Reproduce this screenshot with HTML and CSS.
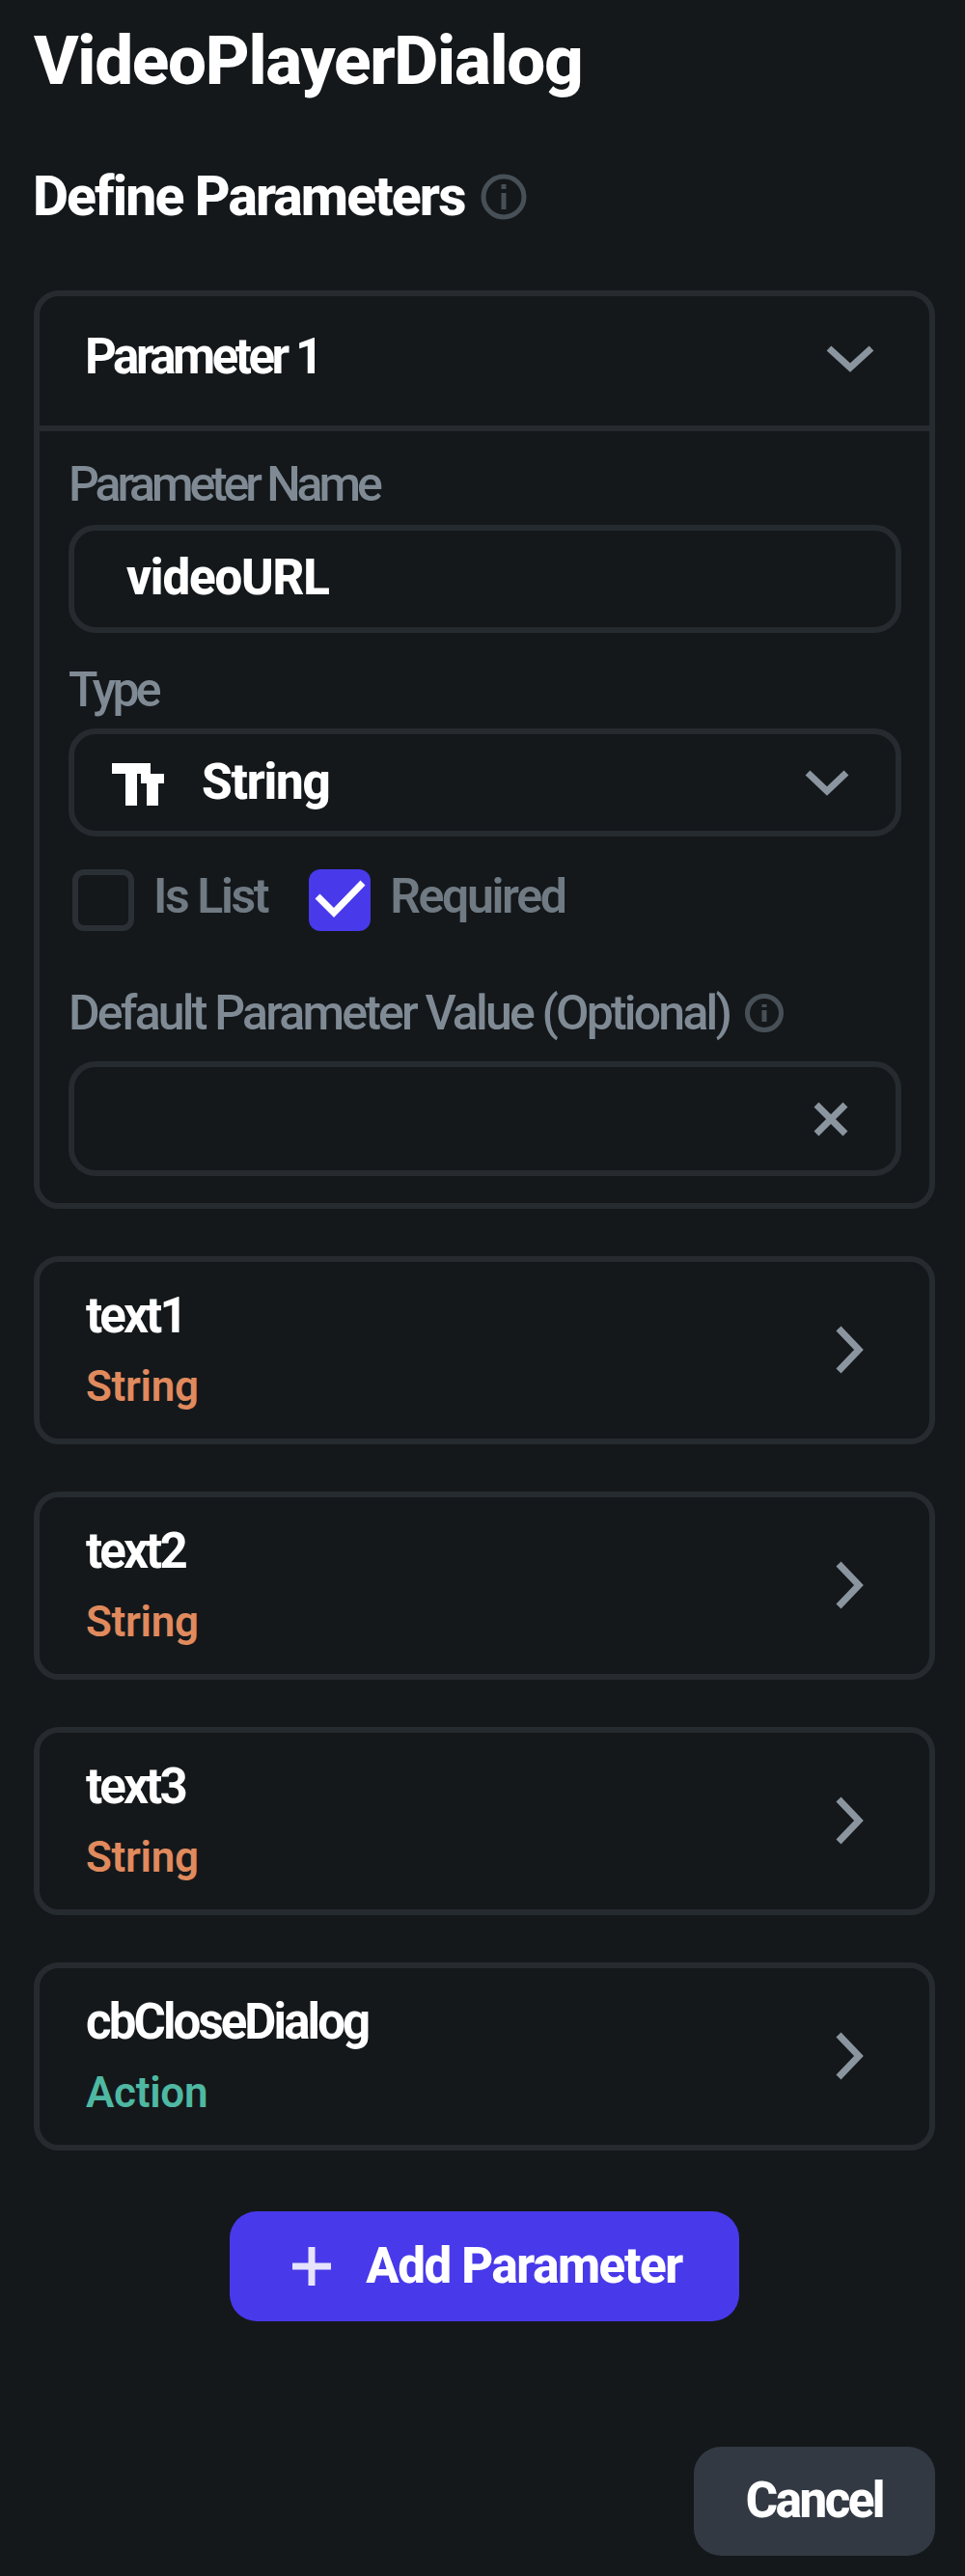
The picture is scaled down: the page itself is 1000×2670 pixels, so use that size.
FILE: index.html
```
<!DOCTYPE html>
<html lang="en">
<head>
    <meta charset="UTF-8">
    <title>VideoPlayerDialog</title>
    <link rel="stylesheet" href="styles.css">
</head>
<body>
    <div class="container">
        <h1>VideoPlayerDialog</h1>

        <div class="section-title">
            <h2>Define Parameters</h2>
            <svg class="info" width="50" height="50" viewBox="0 0 50 50">
                <circle cx="25" cy="25" r="21"/>
                <path d="M25 21v17M25 12v5"/>
            </svg>
        </div>

        <!-- Open parameter -->
        <div class="panel">
            <div class="panel-header">
                <span class="panel-name">Parameter 1</span>
                <svg class="icon" width="52" height="32" viewBox="0 0 52 32">
                    <path d="M4 5l22 20L48 5"/>
                </svg>
            </div>

            <div class="panel-body">
                <label class="label-name" for="name">Parameter Name</label>
                <input class="field" type="text" id="name" value="videoURL">

                <label class="label-type">Type</label>
                <div class="field select">
                    <svg class="type-icon" width="56" height="46" viewBox="0 0 56 46">
                        <path d="M1 1h40v11H27v33H15V12H1z"/>
                        <path d="M31 12h24v10h-6v23H37V22h-6z"/>
                    </svg>
                    <span class="select-value">String</span>
                    <svg class="icon" width="48" height="32" viewBox="0 0 48 32">
                        <path d="M4 6l20 19L44 6"/>
                    </svg>
                </div>

                <div class="checks">
                    <span class="checkbox"></span>
                    <span class="check-label">Is List</span>
                    <span class="checkbox checked">
                        <svg width="64" height="64" viewBox="0 0 64 64">
                            <path d="M9 28l17 17 30-31"/>
                        </svg>
                    </span>
                    <span class="check-label">Required</span>
                </div>

                <div class="label-row">
                    <label class="label-default">Default Parameter Value (Optional)</label>
                    <svg class="info" width="42" height="42" viewBox="0 0 42 42">
                        <circle cx="21" cy="21" r="17.5"/>
                        <path d="M21 18v12M21 12v3"/>
                    </svg>
                </div>
                <div class="field clearable">
                    <svg class="icon" width="38" height="36" viewBox="0 0 38 36">
                        <path d="M4 3l30 30M34 3L4 33"/>
                    </svg>
                </div>
            </div>
        </div>

        <!-- Collapsed parameters -->
        <div class="card">
            <div>
                <div class="card-name">text1</div>
                <div class="card-type string">String</div>
            </div>
            <svg class="icon" width="32" height="54" viewBox="0 0 32 54">
                <path d="M5 5l21 22L5 49"/>
            </svg>
        </div>

        <div class="card">
            <div>
                <div class="card-name">text2</div>
                <div class="card-type string">String</div>
            </div>
            <svg class="icon" width="32" height="54" viewBox="0 0 32 54">
                <path d="M5 5l21 22L5 49"/>
            </svg>
        </div>

        <div class="card">
            <div>
                <div class="card-name">text3</div>
                <div class="card-type string">String</div>
            </div>
            <svg class="icon" width="32" height="54" viewBox="0 0 32 54">
                <path d="M5 5l21 22L5 49"/>
            </svg>
        </div>

        <div class="card">
            <div>
                <div class="card-name long">cbCloseDialog</div>
                <div class="card-type action">Action</div>
            </div>
            <svg class="icon" width="32" height="54" viewBox="0 0 32 54">
                <path d="M5 5l21 22L5 49"/>
            </svg>
        </div>

        <button class="add" type="button">
            <svg width="44" height="44" viewBox="0 0 44 44">
                <path d="M22 2v40M2 22h40"/>
            </svg>
            <span>Add Parameter</span>
        </button>

        <button class="cancel" type="button">Cancel</button>
    </div>
</body>
</html>
```
FILE: styles.css
```
* {
    box-sizing: border-box;
}

body {
    margin: 0;
    background-color: #14181b;
    font-family: Roboto, "Liberation Sans", sans-serif;
    font-size: 51px;
    line-height: 60px;
    color: #fff;
}

.container {
    display: flex;
    flex-direction: column;
    padding: 23px 31px 20px 35px;
}

h1 {
    margin: 0;
    font-size: 71px;
    line-height: 80px;
    font-weight: 800;
    letter-spacing: -1.3px;
}

h2 {
    margin: 0;
    font-size: 57px;
    line-height: 60px;
    font-weight: 800;
    letter-spacing: -1.9px;
}

.section-title {
    display: flex;
    align-items: center;
    gap: 16px;
    margin-top: 71px;
    margin-left: -1px;
}

svg {
    display: block;
    fill: none;
}

.info {
    stroke: #475057;
    stroke-width: 5;
}

.icon {
    stroke: #8b959f;
    stroke-width: 7;
}

.panel {
    margin-top: 67px;
    border: 6px solid #262b30;
    border-radius: 26px;
}

.panel-header {
    display: flex;
    justify-content: space-between;
    align-items: center;
    height: 140px;
    padding: 0 56px 0 47px;
    border-bottom: 6px solid #262b30;
}

.panel-header .icon {
    margin-bottom: 4px;
}

.panel-name {
    padding-bottom: 8px;
    font-weight: bold;
    letter-spacing: -3.5px;
}

.panel-body {
    padding: 25px 29px 28px 30px;
}

label {
    display: block;
    font-size: 50px;
    font-weight: 500;
    color: #7f8a94;
}

.label-name {
    letter-spacing: -4.1px;
}

.label-type {
    margin-top: 29px;
    letter-spacing: -3.8px;
}

.label-default {
    letter-spacing: -2.8px;
}

.field {
    display: flex;
    align-items: center;
    width: 100%;
    height: 112px;
    border: 6px solid #262b30;
    border-radius: 28px;
    background: none;
    color: #fff;
    font-family: inherit;
    font-size: 51px;
    font-weight: 800;
    letter-spacing: -1.2px;
}

input.field {
    margin-top: 12px;
    padding: 0 54px 3px;
}

.select {
    margin-top: 10px;
    padding: 0 47px 0 38px;
}

.type-icon {
    margin-top: 4px;
    fill: #fff;
}

.select-value {
    flex: 1;
    margin-left: 38px;
}

.checks {
    display: flex;
    align-items: center;
    height: 64px;
    margin-top: 34px;
    padding-left: 4px;
}

.checkbox {
    width: 64px;
    height: 64px;
    border: 6px solid #2b3036;
    border-radius: 12px;
}

.checkbox.checked {
    border: none;
    background-color: #4839ea;
}

.checked svg {
    stroke: #fff;
    stroke-width: 7;
}

.check-label {
    margin: 0 43px 9px 20px;
    font-size: 50px;
    font-weight: 600;
    letter-spacing: -2.4px;
    color: #707a83;
}

.label-row {
    display: flex;
    align-items: center;
    gap: 15px;
    margin-top: 55px;
}

.clearable {
    height: 119px;
    justify-content: flex-end;
    margin-top: 20px;
    padding-right: 48px;
}

.card {
    display: flex;
    justify-content: space-between;
    align-items: center;
    height: 195px;
    margin-top: 49px;
    padding: 0 67px 4px 48px;
    border: 6px solid #262b30;
    border-radius: 26px;
}

.card .icon {
    margin-top: 3px;
}

.card-name {
    font-weight: bold;
    letter-spacing: -2.9px;
}

.card-name.long {
    letter-spacing: -2.9px;
}

.card-type {
    margin-top: 18px;
    font-size: 44px;
    line-height: 50px;
    font-weight: 600;
    letter-spacing: -0.3px;
}

.string {
    color: #e08a5d;
}

.action {
    color: #4fb8a2;
}

button {
    display: flex;
    justify-content: center;
    align-items: center;
    border: none;
    border-radius: 28px;
    color: #fff;
    font-family: inherit;
    font-size: 51px;
    font-weight: 800;
    line-height: 60px;
}

.add {
    align-self: center;
    gap: 34px;
    width: 528px;
    height: 114px;
    margin-top: 63px;
    padding: 0 0 1px 4px;
    background-color: #4839ea;
    letter-spacing: -1.4px;
}

.add svg {
    margin-top: 1px;
    stroke: #e6e4fd;
    stroke-width: 7;
}

.cancel {
    align-self: flex-end;
    width: 250px;
    height: 113px;
    margin-top: 130px;
    padding: 0 0 2px;
    background-color: #323943;
    letter-spacing: -2.5px;
}
```
